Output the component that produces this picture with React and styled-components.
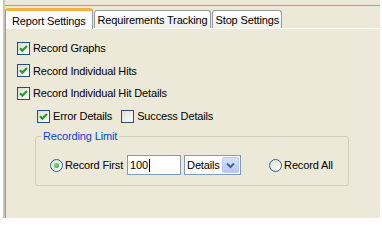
import styled, { createGlobalStyle } from 'styled-components'

const GlobalStyle = createGlobalStyle`
  html, body {
    margin: 0;
    padding: 0;
    background: #ffffff;
  }
  body {
    font-family: "Liberation Sans", Arial, sans-serif;
    font-size: 11px;
    letter-spacing: -0.15px;
    color: #000000;
  }
`

const CheckMark = () => (
  <svg width="9" height="9" viewBox="0 0 9 9">
    <path d="M1 4.2 L3.4 6.6 L8 2" fill="none" stroke="#21A121" strokeWidth="2.2" />
  </svg>
)

const Checkbox = ({ checked, label }) => (
  <CheckLabel>
    <Box>{checked && <CheckMark />}</Box>
    <span>{label}</span>
  </CheckLabel>
)

const Radio = ({ checked, label }) => (
  <RadioLabel>
    <Circle>{checked && <Dot />}</Circle>
    <span>{label}</span>
  </RadioLabel>
)

const App = () => {
  return (
    <>
      <GlobalStyle />
      <Frame>
        <TopRule />
        <TabStrip>
          <Tab $active>Report Settings</Tab>
          <Tab>Requirements Tracking</Tab>
          <Tab>Stop Settings</Tab>
        </TabStrip>
        <Panel>
          <Row><Checkbox checked label="Record Graphs" /></Row>
          <Row><Checkbox checked label="Record Individual Hits" /></Row>
          <Row><Checkbox checked label="Record Individual Hit Details" /></Row>
          <Row $indent>
            <Checkbox checked label="Error Details" />
            <Checkbox label="Success Details" />
          </Row>
          <Group>
            <Legend>Recording Limit</Legend>
            <LimitRow>
              <Radio checked label="Record First" />
              <TextInput>100<Caret /></TextInput>
              <Select>
                <span>Details</span>
                <DropButton>
                  <svg width="9" height="7" viewBox="0 0 9 7">
                    <path d="M1 1.5 L4.5 5 L8 1.5" fill="none" stroke="#4D6185" strokeWidth="2" />
                  </svg>
                </DropButton>
              </Select>
              <RecordAll>
                <Radio label="Record All" />
              </RecordAll>
            </LimitRow>
          </Group>
        </Panel>
      </Frame>
    </>
  )
}

export default App

const Frame = styled.div`
  margin-left: 3px;
  width: 377px;
  height: 218px;
  background: #ece9d8;
  border-left: 2px solid #c9c6b8;
  box-sizing: border-box;
  display: flex;
  flex-direction: column;
  padding-top: 5px;
`

const TopRule = styled.div`
  height: 1px;
  background: #8ca5c4;
`

const TabStrip = styled.div`
  height: 22px;
  display: flex;
  align-items: flex-end;
  gap: 1px;
`

const Tab = styled.div`
  box-sizing: border-box;
  height: ${p => (p.$active ? '21px' : '18px')};
  padding: ${p => (p.$active ? '3px 6px 0 6px' : '2px 2px 0 3px')};
  margin-bottom: ${p => (p.$active ? '-1px' : '0')};
  border: 1px solid #919b9c;
  border-bottom: none;
  border-top: ${p => (p.$active ? '3px solid #f6b33c' : '1px solid #919b9c')};
  border-radius: 3px 3px 0 0;
  background: ${p => (p.$active ? '#fcfcfe' : 'linear-gradient(#ffffff, #f0f0ea)')};
  white-space: nowrap;
  position: relative;
  z-index: ${p => (p.$active ? 1 : 0)};
  line-height: 14px;
`

const Panel = styled.div`
  flex: 1;
  border-top: 1px solid #ffffff;
  border-left: 1px solid #7f9db9;
  padding: 8px 0 0 11px;
`

const Row = styled.div`
  height: 22.6px;
  display: flex;
  align-items: center;
  gap: 9px;
  padding-left: ${p => (p.$indent ? '20px' : '0')};
`

const CheckLabel = styled.label`
  display: flex;
  align-items: center;
  gap: 3px;
`

const Box = styled.span`
  box-sizing: border-box;
  width: 13px;
  height: 13px;
  border: 1px solid #1c5180;
  background: linear-gradient(135deg, #dcdcd7, #ffffff);
  display: flex;
  align-items: center;
  justify-content: center;
`

const RadioLabel = styled.label`
  display: flex;
  align-items: center;
  gap: 2px;
`

const Circle = styled.span`
  box-sizing: border-box;
  width: 13px;
  height: 13px;
  border-radius: 50%;
  border: 1px solid #2c628b;
  background: linear-gradient(135deg, #dcdcd7, #ffffff);
  display: flex;
  align-items: center;
  justify-content: center;
`

const Dot = styled.span`
  width: 5px;
  height: 5px;
  border-radius: 50%;
  background: radial-gradient(circle at 40% 40%, #7fe07f, #21a121);
`

const Group = styled.fieldset`
  margin: 3px 0 0 18px;
  width: 314px;
  box-sizing: border-box;
  border: 1px solid #d0d0bf;
  border-radius: 3px;
  padding: 12px 0 10px 14px;
`

const Legend = styled.legend`
  color: #0046d5;
  padding: 0 2px;
  margin-left: -9px;
  line-height: 13px;
`

const LimitRow = styled.div`
  display: flex;
  align-items: center;
  height: 20px;
`

const TextInput = styled.div`
  box-sizing: border-box;
  width: 54px;
  height: 20px;
  margin-left: 4px;
  border: 1px solid #7f9db9;
  background: #ffffff;
  padding-left: 2px;
  display: flex;
  align-items: center;
`

const Caret = styled.span`
  width: 1px;
  height: 13px;
  background: #000000;
  margin-left: 1px;
`

const Select = styled.div`
  box-sizing: border-box;
  width: 57px;
  height: 20px;
  margin-left: 3px;
  border: 1px solid #7f9db9;
  background: #ffffff;
  padding: 1px 1px 1px 2px;
  display: flex;
  align-items: center;
  justify-content: space-between;
`

const DropButton = styled.span`
  box-sizing: border-box;
  width: 17px;
  height: 16px;
  border: 1px solid #b9cbf3;
  border-radius: 2px;
  background: linear-gradient(#d6e2fd, #b4c8f6);
  display: flex;
  align-items: center;
  justify-content: center;
`

const RecordAll = styled.div`
  margin-left: 28px;
`
